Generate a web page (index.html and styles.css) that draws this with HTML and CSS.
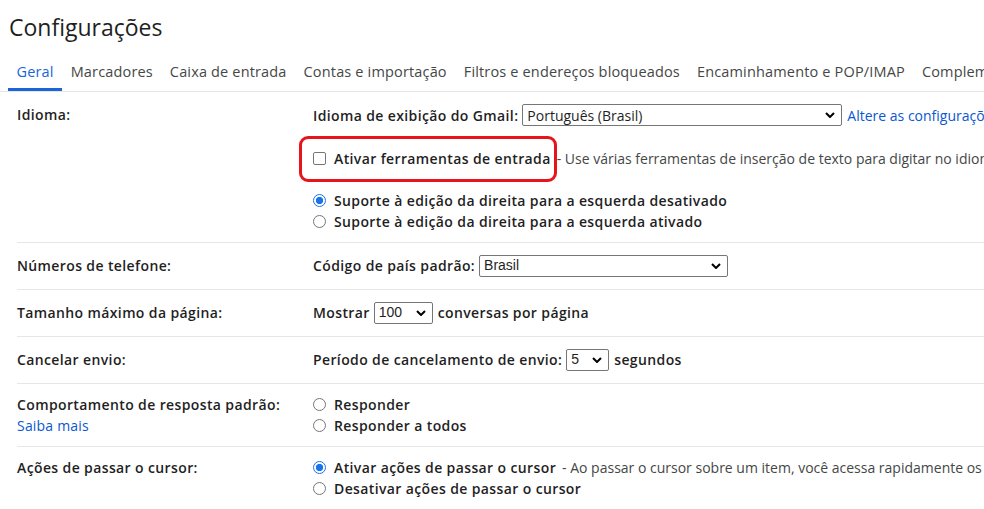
FILE: index.html
```html
<!DOCTYPE html>
<html lang="pt-BR">
<head>
<meta charset="utf-8">
<title>Configurações</title>
<link rel="stylesheet" href="styles.css">
</head>
<body>
<div class="page">
  <h1 class="title">Configurações</h1>
  <nav class="tabs">
    <span class="tab active">Geral</span>
    <span class="tab">Marcadores</span>
    <span class="tab">Caixa de entrada</span>
    <span class="tab">Contas e importação</span>
    <span class="tab">Filtros e endereços bloqueados</span>
    <span class="tab">Encaminhamento e POP/IMAP</span>
    <span class="tab">Complementos</span>
  </nav>

  <div class="row">
    <div class="label">Idioma:</div>
    <div class="content">
      <div class="line sel-line">
        <span class="strong">Idioma de exibição do Gmail:</span>
        <span class="select lang"><span class="val">Português (Brasil)</span><svg class="chev" viewBox="0 0 10 6" width="10" height="6"><path d="M1 1l4 4 4-4" fill="none" stroke="#000" stroke-width="2"/></svg></span>
        <a class="link">Altere as configurações de idioma de outros produtos do Google</a>
      </div>
      <div class="line check-line">
        <span class="checkbox"></span>
        <span class="strong">Ativar ferramentas de entrada</span>
        <span class="desc">- Use várias ferramentas de inserção de texto para digitar no idioma que preferir</span>
        <span class="highlight"></span>
      </div>
      <div class="line radio-first"><span class="radio on"></span><span class="strong">Suporte à edição da direita para a esquerda desativado</span></div>
      <div class="line"><span class="radio"></span><span class="strong">Suporte à edição da direita para a esquerda ativado</span></div>
    </div>
  </div>

  <div class="row">
    <div class="label">Números de telefone:</div>
    <div class="content">
      <div class="line sel-line">
        <span class="strong">Código de país padrão:</span>
        <span class="select country"><span class="val arial">Brasil</span><svg class="chev" viewBox="0 0 10 6" width="10" height="6"><path d="M1 1l4 4 4-4" fill="none" stroke="#000" stroke-width="2"/></svg></span>
      </div>
    </div>
  </div>

  <div class="row">
    <div class="label">Tamanho máximo da página:</div>
    <div class="content">
      <div class="line sel-line">
        <span class="strong">Mostrar</span>
        <span class="select small"><span class="val arial">100</span><svg class="chev" viewBox="0 0 10 6" width="10" height="6"><path d="M1 1l4 4 4-4" fill="none" stroke="#000" stroke-width="2"/></svg></span>
        <span class="strong">conversas por página</span>
      </div>
    </div>
  </div>

  <div class="row">
    <div class="label">Cancelar envio:</div>
    <div class="content">
      <div class="line sel-line">
        <span class="strong">Período de cancelamento de envio:</span>
        <span class="select tiny"><span class="val arial">5</span><svg class="chev" viewBox="0 0 10 6" width="10" height="6"><path d="M1 1l4 4 4-4" fill="none" stroke="#000" stroke-width="2"/></svg></span>
        <span class="strong">segundos</span>
      </div>
    </div>
  </div>

  <div class="row">
    <div class="label">
      <div class="line">Comportamento de resposta padrão:</div>
      <div class="line"><a class="link normal">Saiba mais</a></div>
    </div>
    <div class="content">
      <div class="line"><span class="radio"></span><span class="strong">Responder</span></div>
      <div class="line"><span class="radio"></span><span class="strong">Responder a todos</span></div>
    </div>
  </div>

  <div class="row last">
    <div class="label">Ações de passar o cursor:</div>
    <div class="content">
      <div class="line"><span class="radio on"></span><span class="strong">Ativar ações de passar o cursor</span><span class="desc">- Ao passar o cursor sobre um item, você acessa rapidamente os controles de arquivar, excluir, marcar como lido e adiar.</span></div>
      <div class="line"><span class="radio"></span><span class="strong">Desativar ações de passar o cursor</span></div>
    </div>
  </div>
</div>
</body>
</html>
```

FILE: styles.css
```css
* { box-sizing: border-box; }
html, body {
  margin: 0;
  padding: 0;
  background: #fff;
  overflow: hidden;
}
body {
  font-family: "Open Sans", Roboto, "Noto Sans", Arial, sans-serif;
  color: #1f1f1f;
  font-size: 14px;
}
.page {
  width: 984px;
  height: 509px;
  overflow: hidden;
  white-space: nowrap;
}
.title {
  margin: 0;
  padding: 13px 0 0 9px;
  height: 57px;
  font-size: 23px;
  font-weight: 400;
  line-height: 28px;
  color: #1f1f1f;
}
.tabs {
  display: flex;
  padding-left: 8px;
  height: 35px;
  border-bottom: 1px solid #e6e6e6;
}
.tab {
  display: flex;
  align-items: center;
  flex: none;
  padding: 0 8.5px 2px;
  font-size: 14.5px;
  letter-spacing: 0.16px;
  color: #444746;
  border-bottom: 3px solid transparent;
}
.tab.active {
  color: #1a66d8;
  border-bottom-color: #1a66d8;
}
.row {
  display: flex;
  margin-left: 17px;
  padding: 10px 0;
  border-bottom: 1px solid #e6e6e6;
}
.row.last { border-bottom: none; }
.label {
  width: 296px;
  flex: none;
  font-weight: 600;
  letter-spacing: 0.38px;
  line-height: 21px;
}
.row:has(.sel-line) .label { line-height: 26px; }
.content {
  flex: 1;
  min-width: 0;
  position: relative;
}
.line {
  display: flex;
  align-items: center;
  height: 21px;
  line-height: 21px;
}
.sel-line { height: 26px; }
.check-line {
  margin-top: 19.5px;
  position: relative;
}
.radio-first { margin-top: 21px; }
.strong { font-weight: 600; letter-spacing: 0.38px; flex: none; }
.desc {
  color: #444746;
  margin-left: 6px;
  flex: none;
}
.link {
  color: #0b57d0;
  margin-left: 5px;
  flex: none;
}
.link.normal { margin-left: 0; font-weight: 400; letter-spacing: 0.2px; }
.select {
  display: flex;
  align-items: center;
  justify-content: space-between;
  flex: none;
  height: 22px;
  margin-left: 4px;
  padding: 0 4px;
  border: 1px solid #767676;
  border-radius: 2px;
  background: #fff;
  font-weight: 400;
  letter-spacing: 0;
  color: #1f1f1f;
}
.select + .strong { margin-left: 5px; }
.select.lang { width: 320px; }
.select.country { width: 249px; }
.select.small { width: 59px; }
.select.tiny { width: 43px; }
.arial { font-family: "Liberation Sans", Arial, sans-serif; font-size: 14px; }
.chev { flex: none; margin-right: 2px; }
.checkbox {
  width: 13px;
  height: 13px;
  border: 1px solid #767676;
  border-radius: 2px;
  margin-right: 8px;
  flex: none;
}
.radio {
  width: 13px;
  height: 13px;
  border: 1px solid #767676;
  border-radius: 50%;
  margin-right: 8px;
  flex: none;
  background: #fff;
}
.radio.on {
  border: 1.5px solid #1a73e8;
  background: radial-gradient(circle, #1a73e8 0 3.4px, #fff 3.9px);
}
.highlight {
  position: absolute;
  left: -14px;
  top: -11.5px;
  width: 258px;
  height: 46px;
  border: 3px solid #e8141c;
  border-radius: 9px;
  pointer-events: none;
}
```
